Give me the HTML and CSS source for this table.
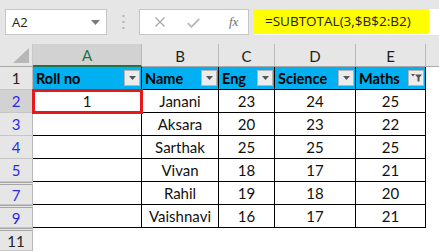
FILE: index.html
```html
<!DOCTYPE html>
<html>
<head>
<meta charset="utf-8">
<link rel="stylesheet" href="styles.css">
</head>
<body>
<div class="toolbar">
  <div class="namebox"><span class="nb-text">A2</span>
    <svg class="nb-arrow" width="9" height="5" viewBox="0 0 9 5"><path d="M0 0H9L4.5 5Z" fill="#7a7a7a"/></svg>
  </div>
  <svg class="dots" width="3" height="14" viewBox="0 0 3 14"><rect x="0.5" y="0" width="2" height="2" fill="#b3b3b3"/><rect x="0.5" y="6" width="2" height="2" fill="#b3b3b3"/><rect x="0.5" y="12" width="2" height="2" fill="#b3b3b3"/></svg>
  <div class="fxbox">
    <svg class="ic-x" width="10" height="10" viewBox="0 0 10 10"><path d="M0.5 0.5L9.5 9.5M9.5 0.5L0.5 9.5" stroke="#a8a8a8" stroke-width="1.2" fill="none"/></svg>
    <svg class="ic-ok" width="13" height="10" viewBox="0 0 13 10"><path d="M0.8 5.2L4.5 8.8L12.2 1" stroke="#b8b8b8" stroke-width="1.8" fill="none"/></svg>
    <span class="fx">fx</span>
  </div>
  <div class="formula"><span class="hl">=SUBTOTAL(3,$B$2:B2)</span></div>
</div>

<div class="sheet">
  <div class="corner"><svg width="16" height="15" viewBox="0 0 16 15"><path d="M16 0V15H0Z" fill="#b7b7b7"/></svg></div>
  <div class="ch sel">A</div>
  <div class="ch">B</div>
  <div class="ch">C</div>
  <div class="ch">D</div>
  <div class="ch">E</div>
  <div class="ch last"></div>

  <div class="rh">1</div>
  <div class="hd first"><span>Roll no</span><span class="fbtn"><svg width="7" height="4" viewBox="0 0 7 4"><path d="M0 0H7L3.5 4Z" fill="#555"/></svg></span></div>
  <div class="hd"><span>Name</span><span class="fbtn"><svg width="7" height="4" viewBox="0 0 7 4"><path d="M0 0H7L3.5 4Z" fill="#555"/></svg></span></div>
  <div class="hd"><span>Eng</span><span class="fbtn"><svg width="7" height="4" viewBox="0 0 7 4"><path d="M0 0H7L3.5 4Z" fill="#555"/></svg></span></div>
  <div class="hd"><span>Science</span><span class="fbtn"><svg width="7" height="4" viewBox="0 0 7 4"><path d="M0 0H7L3.5 4Z" fill="#555"/></svg></span></div>
  <div class="hd"><span>Maths</span><span class="fbtn"><svg width="11" height="8" viewBox="0 0 11 8"><path d="M0 0H4L2 2.5Z" fill="#555"/><path d="M4 0.5H11L8.5 3.5V7.5H6.5V3.5Z" fill="#555"/></svg></span></div>
  <div class="blank"></div>

  <div class="rh blue selr">2</div>
  <div class="c first a2">1</div><div class="c">Janani</div><div class="c">23</div><div class="c">24</div><div class="c">25</div><div class="blank"></div>

  <div class="rh blue">3</div>
  <div class="c first"></div><div class="c">Aksara</div><div class="c">20</div><div class="c">23</div><div class="c">22</div><div class="blank"></div>

  <div class="rh blue">4</div>
  <div class="c first"></div><div class="c">Sarthak</div><div class="c">25</div><div class="c">25</div><div class="c">25</div><div class="blank"></div>

  <div class="rh blue">5</div>
  <div class="c first"></div><div class="c">Vivan</div><div class="c">18</div><div class="c">17</div><div class="c">21</div><div class="blank"></div>

  <div class="rh blue hid">7</div>
  <div class="c first"></div><div class="c">Rahil</div><div class="c">19</div><div class="c">18</div><div class="c">20</div><div class="blank"></div>

  <div class="rh blue hid">9</div>
  <div class="c first"></div><div class="c">Vaishnavi</div><div class="c">16</div><div class="c">17</div><div class="c">21</div><div class="blank"></div>

  <div class="rh hid">11</div>
  <div class="blank"></div><div class="blank"></div><div class="blank"></div><div class="blank"></div><div class="blank"></div><div class="blank"></div>
</div>
</body>
</html>
```

FILE: styles.css
```css
* { box-sizing: border-box; }
html, body { margin: 0; padding: 0; }
body {
  width: 439px;
  height: 252px;
  overflow: hidden;
  background: #fff;
  font-family: Lato, "Liberation Sans", sans-serif;
}

.toolbar {
  height: 44px;
  background: #e6e6e6;
  display: flex;
  align-items: flex-start;
  padding-top: 9px;
}
.namebox {
  margin-left: 5px;
  width: 102px;
  height: 26px;
  background: #fff;
  border: 1px solid #c6c6c6;
  display: flex;
  align-items: center;
  justify-content: space-between;
  padding: 0 6px 0 6px;
}
.nb-text {
  font-family: "Open Sans", "Noto Sans", sans-serif;
  font-size: 13px;
  color: #222;
}
.dots { margin: 6px 0 0 15px; }
.fxbox {
  margin-left: 14px;
  width: 110px;
  height: 26px;
  background: #fff;
  border: 1px solid #c6c6c6;
  display: flex;
  align-items: center;
  padding-left: 15px;
}
.ic-x { margin-right: 22px; }
.ic-ok { margin-right: 29px; margin-top: 1px; }
.fx {
  font-family: "Liberation Serif", serif;
  font-style: italic;
  font-size: 13px;
  color: #6f6f6f;
}
.formula {
  margin-left: 5px;
  flex: 1;
  height: 26px;
  background: #fff;
  display: flex;
}
.hl {
  width: 175px;
  background: #ffff00;
  font-family: "Open Sans", "Noto Sans", sans-serif;
  font-size: 13.5px;
  color: #222;
  padding-left: 11px;
  line-height: 25px;
  height: 25px;
}

.sheet {
  display: grid;
  grid-template-columns: 33px 109px 77px 56px 81px 70px 1fr;
  grid-auto-rows: 23px;
}
.corner {
  background: #e6e6e6;
  border-right: 1px solid #c9c9c9;
  border-bottom: 1px solid #a8a8a8;
  display: flex;
  align-items: flex-end;
  justify-content: flex-end;
  padding: 0 3px 3px 0;
}
.ch {
  background: #e6e6e6;
  border-right: 1px solid #b9b9b9;
  border-bottom: 1px solid #a8a8a8;
  display: flex;
  align-items: center;
  justify-content: center;
  font-size: 15px;
  color: #1e1e1e;
  padding-top: 1px;
}
.ch.sel {
  background: #d2d2d2;
  color: #217346;
  border-bottom: 2px solid #217346;
}
.ch.last { border-right: none; }

.rh {
  background: #e6e6e6;
  border-right: 1px solid #b9b9b9;
  border-bottom: 1px solid #c6c6c6;
  display: flex;
  align-items: center;
  justify-content: center;
  font-size: 15px;
  color: #222;
}
.rh.blue { color: #2a2ae6; }
.rh.selr { background: #d2d2d2; }
.rh.hid { border-top: 3px double #a6a6a6; }

.hd {
  background: #00b0f0;
  border-right: 1px solid #000;
  border-bottom: 1px solid #000;
  display: flex;
  align-items: center;
  justify-content: space-between;
  padding: 0 1px 0 3px;
  font-weight: 700;
  font-size: 14.5px;
  color: #000;
}
.hd.first { border-left: 0; }
.fbtn {
  width: 16px;
  height: 16px;
  background: #ececec;
  border: 1px solid #b5b5b5;
  display: flex;
  align-items: center;
  justify-content: center;
}

.c {
  border-right: 1px solid #000;
  border-bottom: 1px solid #000;
  display: flex;
  align-items: center;
  justify-content: center;
  font-size: 15px;
  color: #111;
}
.c.a2 {
  position: relative;
  z-index: 1;
  outline: 3px solid #e8191b;
  outline-offset: -2px;
}
.blank { background: #fff; }
```
